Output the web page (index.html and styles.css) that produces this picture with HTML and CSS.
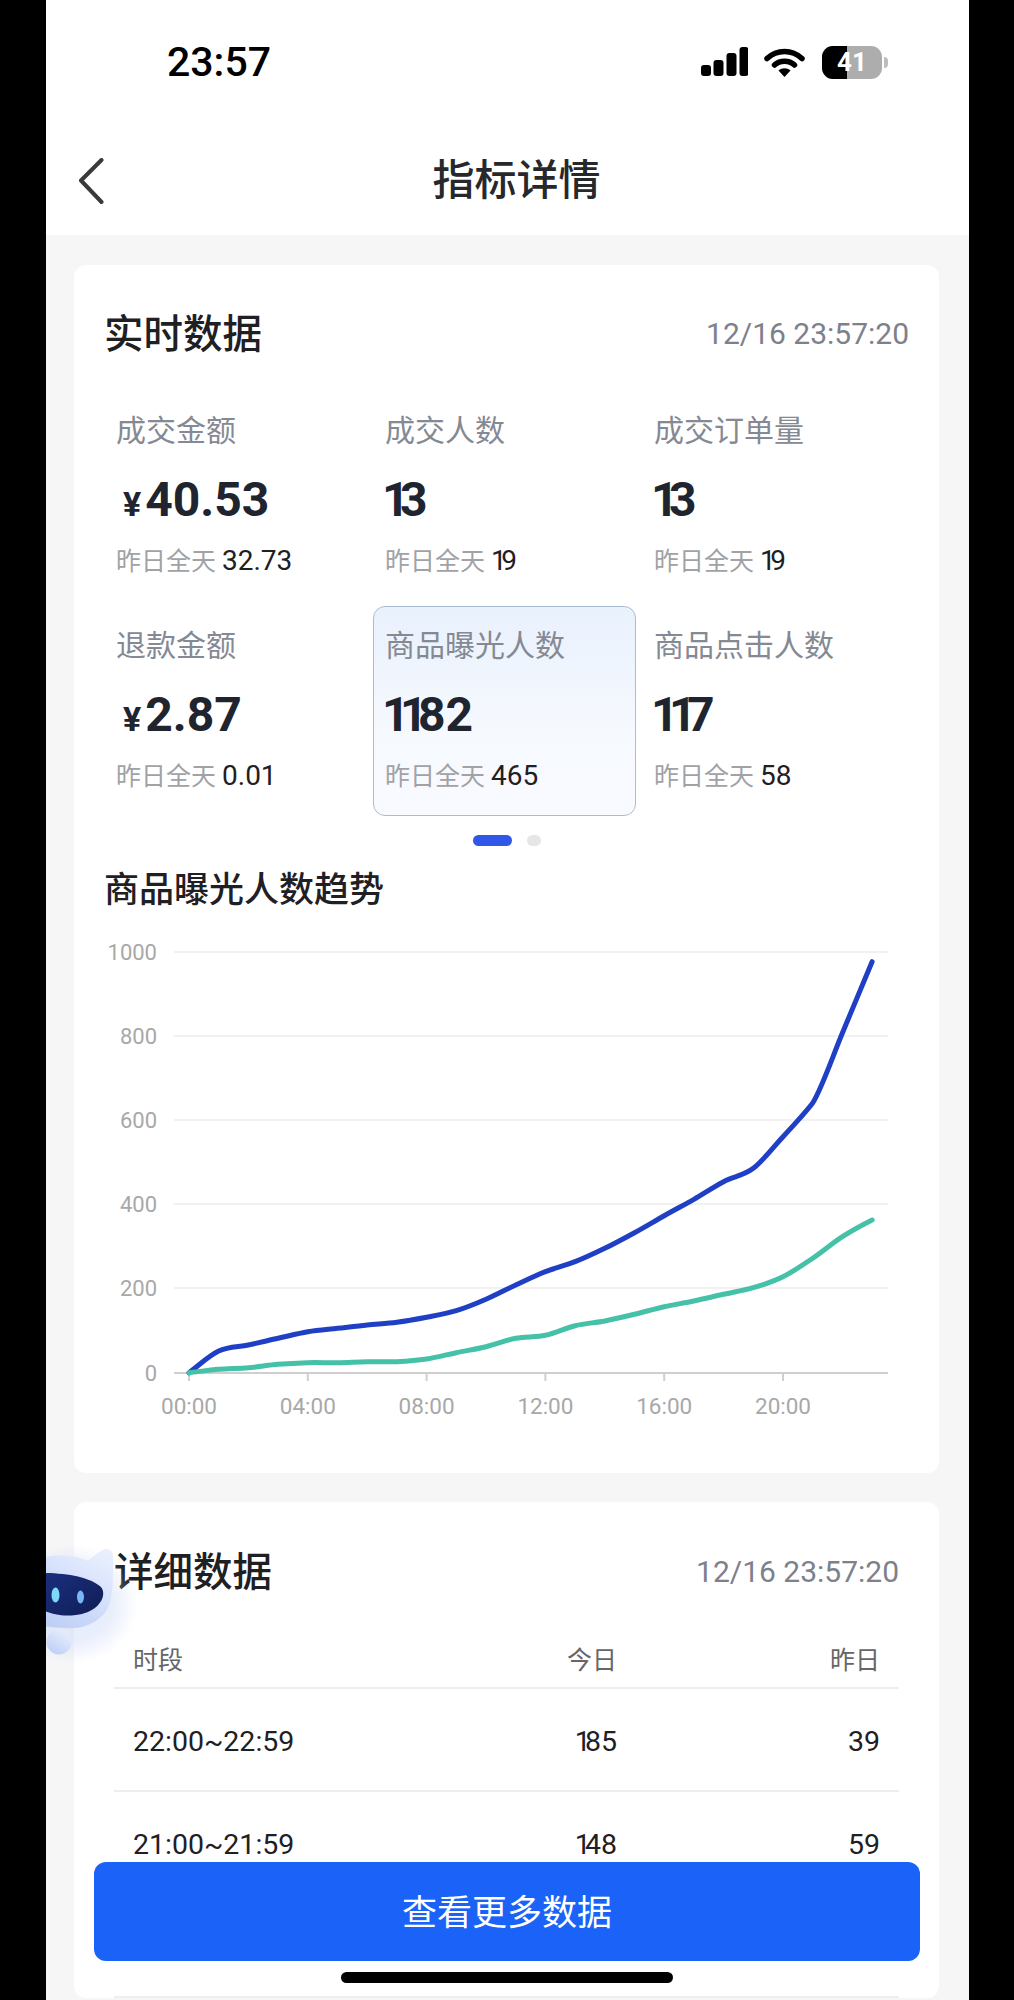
FILE: index.html
```html
<!DOCTYPE html>
<html lang="zh-CN">
<head>
<meta charset="utf-8">
<title>指标详情</title>
<link rel="stylesheet" href="styles.css">
</head>
<body>
<div class="phone">
  <header class="top">
    <div class="status">
      <span class="clock">23:57</span>
      <div class="status-icons">
        <svg class="signal" width="47" height="30" viewBox="0 0 47 30"><rect x="0" y="18" width="10" height="11" rx="3"/><rect x="12.500" y="13" width="10" height="16" rx="3"/><rect x="25.500" y="6" width="10" height="23" rx="3"/><rect x="38.500" y="0" width="9" height="29" rx="3"/></svg>
        <svg class="wifi" width="41" height="30" viewBox="0 0 41 30"><path d="M3 11.500C13 2 28 2 38 11.500" fill="none" stroke="#000" stroke-width="5.500" stroke-linecap="round"/><path d="M10.500 18C16 13 25 13 30.500 18" fill="none" stroke="#000" stroke-width="5.500" stroke-linecap="round"/><path d="M14.500 23.500C18 20.500 23 20.500 26.500 23.500L20.500 30Z"/></svg>
        <div class="battery"><span class="battery-fill"></span><span class="battery-num">41</span><span class="battery-tip"></span></div>
      </div>
    </div>
    <nav class="nav">
      <svg class="back" width="26" height="46" viewBox="0 0 26 46"><path d="M23.500 2L3 22.500L23.500 44" fill="none" stroke="#3a3a3a" stroke-width="4" stroke-linecap="round" stroke-linejoin="round"/></svg>
      <h1 class="nav-title">指标详情</h1>
    </nav>
  </header>

  <main class="content">
    <section class="card card-live">
      <div class="card-head">
        <h2 class="card-title">实时数据</h2>
        <span class="stamp">12/16 23:57:20</span>
      </div>
      <div class="metrics">
        <div class="metric">
          <div class="metric-label">成交金额</div>
          <div class="metric-value"><span class="yen">¥</span>40.53</div>
          <div class="metric-sub"><span>昨日全天</span><b>32.73</b></div>
        </div>
        <div class="metric">
          <div class="metric-label">成交人数</div>
          <div class="metric-value lead"><span class="d1">1</span>3</div>
          <div class="metric-sub"><span>昨日全天</span><b><span class="d1">1</span>9</b></div>
        </div>
        <div class="metric">
          <div class="metric-label">成交订单量</div>
          <div class="metric-value lead"><span class="d1">1</span>3</div>
          <div class="metric-sub"><span>昨日全天</span><b><span class="d1">1</span>9</b></div>
        </div>
        <div class="metric">
          <div class="metric-label">退款金额</div>
          <div class="metric-value"><span class="yen">¥</span>2.87</div>
          <div class="metric-sub"><span>昨日全天</span><b>0.01</b></div>
        </div>
        <div class="metric metric-active">
          <div class="metric-label">商品曝光人数</div>
          <div class="metric-value lead"><span class="d1">11</span>82</div>
          <div class="metric-sub"><span>昨日全天</span><b>465</b></div>
        </div>
        <div class="metric">
          <div class="metric-label">商品点击人数</div>
          <div class="metric-value lead"><span class="d1">11</span>7</div>
          <div class="metric-sub"><span>昨日全天</span><b>58</b></div>
        </div>
      </div>
      <div class="dots"><span class="dot-on"></span><span class="dot-off"></span></div>
      <h3 class="chart-title">商品曝光人数趋势</h3>
      <svg class="chart" width="865" height="543" viewBox="74 930 865 543">
        <g class="grid">
          <line x1="174" x2="888" y1="952" y2="952"/>
          <line x1="174" x2="888" y1="1036" y2="1036"/>
          <line x1="174" x2="888" y1="1120" y2="1120"/>
          <line x1="174" x2="888" y1="1204" y2="1204"/>
          <line x1="174" x2="888" y1="1288" y2="1288"/>
        </g>
        <g class="axis">
          <line x1="174" x2="888" y1="1373" y2="1373"/>
          <line x1="189" x2="189" y1="1373" y2="1381"/>
          <line x1="307.800" x2="307.800" y1="1373" y2="1381"/>
          <line x1="426.600" x2="426.600" y1="1373" y2="1381"/>
          <line x1="545.400" x2="545.400" y1="1373" y2="1381"/>
          <line x1="664.200" x2="664.200" y1="1373" y2="1381"/>
          <line x1="783" x2="783" y1="1373" y2="1381"/>
        </g>
        <g class="ylabels">
          <text x="157" y="960">1000</text>
          <text x="157" y="1044">800</text>
          <text x="157" y="1128">600</text>
          <text x="157" y="1212">400</text>
          <text x="157" y="1296">200</text>
          <text x="157" y="1381">0</text>
        </g>
        <g class="xlabels">
          <text x="189" y="1414">00:00</text>
          <text x="307.800" y="1414">04:00</text>
          <text x="426.600" y="1414">08:00</text>
          <text x="545.400" y="1414">12:00</text>
          <text x="664.200" y="1414">16:00</text>
          <text x="783" y="1414">20:00</text>
        </g>
        <path class="line-blue" d="M189 1372.700c9.900 -7.200 19.800 -17.100 29.700 -21.700c9.900 -4.600 19.800 -3.900 29.700 -6c9.900 -2.100 19.800 -4.500 29.700 -6.700c9.900 -2.200 19.800 -4.900 29.700 -6.600c9.900 -1.700 19.800 -2.300 29.700 -3.400c9.900 -1.100 19.800 -2.300 29.700 -3.300c9.900 -1 19.800 -1.400 29.700 -2.700c9.900 -1.300 19.800 -3.100 29.700 -5c9.900 -1.900 19.800 -3.600 29.700 -6.600c9.900 -3 19.800 -7.100 29.700 -11.400c9.900 -4.300 19.800 -9.700 29.700 -14.300c9.900 -4.600 19.800 -9.400 29.700 -13.300c9.900 -3.900 19.800 -6.100 29.700 -10c9.900 -3.900 19.800 -8.600 29.700 -13.400c9.900 -4.800 19.800 -10.200 29.700 -15.600c9.900 -5.400 19.800 -11.400 29.700 -17c9.900 -5.600 19.800 -10.700 29.700 -16.400c9.900 -5.700 19.800 -12.400 29.700 -17.600c9.900 -5.200 19.800 -5.900 29.700 -13.400c9.900 -7.500 19.800 -21 29.700 -31.600c9.900 -10.600 21.800 -23.400 29.700 -33.700c8.900 -14.300 19.800 -46.100 29.700 -70c9.900 -23.900 19.800 -47.400 29.700 -71.300"/>
        <path class="line-green" d="M189 1372.700c9.900 -1.100 19.800 -2.600 29.700 -3.400c9.900 -.8 19.800 -.8 29.700 -1.600c9.900 -.8 19.800 -2.600 29.700 -3.400c9.900 -.8 19.800 -1.300 29.700 -1.600c9.900 -.3 19.800 .2 29.700 0c9.900 -.2 19.800 -.8 29.700 -1c9.900 -.2 19.800 .5 29.700 0c9.900 -.5 19.800 -1.200 29.700 -2.700c9.900 -1.500 19.800 -4.200 29.700 -6.300c9.900 -2.100 19.800 -3.600 29.700 -6c9.900 -2.400 19.800 -6.500 29.700 -8.400c9.900 -1.900 19.800 -.9 29.700 -3c9.900 -2.100 19.800 -7.200 29.700 -9.600c9.900 -2.400 19.800 -2.800 29.700 -4.700c9.900 -1.900 19.800 -4.300 29.700 -6.700c9.900 -2.400 19.800 -5.400 29.700 -7.600c9.900 -2.200 19.800 -3.600 29.700 -5.700c9.900 -2.100 19.800 -4.500 29.700 -6.700c9.900 -2.200 19.800 -3.700 29.700 -6.600c9.900 -2.900 19.800 -6.100 29.700 -11c9.900 -4.900 19.800 -11.700 29.700 -18.400c9.900 -6.700 19.800 -15.200 29.700 -21.600c9.900 -6.400 19.800 -11.700 29.700 -16.700"/>
      </svg>
    </section>

    <section class="card card-table">
      <div class="card-head">
        <h2 class="card-title">详细数据</h2>
        <span class="stamp">12/16 23:57:20</span>
      </div>
      <div class="table">
        <div class="row row-head"><span>时段</span><span class="num">今日</span><span class="num">昨日</span></div>
        <div class="row"><span>22:00~22:59</span><span class="num"><span class="d1">1</span>85</span><span class="num">39</span></div>
        <div class="row"><span>21:00~21:59</span><span class="num"><span class="d1">1</span>48</span><span class="num">59</span></div>
        <div class="row"><span>&nbsp;</span></div>
      </div>
    </section>
  </main>

  <svg class="robot" width="100" height="125" viewBox="0 0 100 125">
    <defs>
      <radialGradient id="glow" cx="0.5" cy="0.5" r="0.5">
        <stop offset="0.6" stop-color="#c6d4f6" stop-opacity="0.4"/>
        <stop offset="1" stop-color="#c6d4f6" stop-opacity="0"/>
      </radialGradient>
      <linearGradient id="shell" x1="0.8" y1="0" x2="0.2" y2="1">
        <stop offset="0" stop-color="#e9effe"/>
        <stop offset="1" stop-color="#bccef6"/>
      </linearGradient>
      <linearGradient id="visor" x1="0" y1="0" x2="1" y2="1">
        <stop offset="0" stop-color="#1a2f7f"/>
        <stop offset="1" stop-color="#101d55"/>
      </linearGradient>
    </defs>
    <ellipse cx="26" cy="64" rx="66" ry="60" fill="url(#glow)"/>
    <path d="M-12 20C8 13 30 15 42 21C48 16 54 10 60 9C66 9 68 14 67 24C67 36 67 50 64 62C60 78 42 90 20 88C6 88 -6 86 -12 84Z" fill="url(#shell)"/>
    <path d="M-4 33C20 33 44 37 55 47C62 56 52 73 30 75C14 77 4 73 -4 70Z" fill="url(#visor)"/>
    <ellipse cx="9.500" cy="55" rx="4" ry="7.500" fill="#7fd8f8"/>
    <ellipse cx="34.500" cy="57" rx="3.500" ry="6.500" fill="#79b6f6"/>
    <circle cx="13" cy="102" r="12.500" fill="url(#shell)"/>
  </svg>

  <button class="more" type="button">查看更多数据</button>
  <div class="home-bar"></div>
</div>
</body>
</html>
```
FILE: styles.css
```css
* { box-sizing: border-box; }
html, body { margin: 0; padding: 0; background: #000; }
body { font-family: Roboto, "Noto Sans CJK SC", "Liberation Sans", sans-serif; }
h1, h2, h3 { margin: 0; font-weight: 500; }

.phone {
  position: relative;
  width: 923px;
  height: 2000px;
  margin-left: 46px;
  overflow: hidden;
  background: #f6f6f6;
}

/* header */
.top { height: 235px; background: #fff; padding-top: 42px; }
.status { display: flex; justify-content: space-between; align-items: center; height: 40px; padding: 0 87px 0 121px; }
.clock { font-size: 41px; font-weight: 500; line-height: 40px; color: #000; }
.status-icons { display: flex; align-items: center; }
.signal { display: block; margin-right: 16px; }
.wifi { display: block; margin-right: 17px; }
.battery { position: relative; width: 60px; height: 33px; border-radius: 11px; background: #adadad; }
.battery-fill { position: absolute; left: 0; top: 0; bottom: 0; width: 25px; border-radius: 11px 0 0 11px; background: #000; }
.battery-num { position: absolute; left: 0; right: 0; top: 0; text-align: center; color: #fff; font-size: 26px; font-weight: 700; line-height: 33px; }
.battery-tip { position: absolute; left: 62px; top: 11px; width: 4px; height: 11px; border-radius: 0 4px 4px 0; background: #bdbdbd; }

.nav { position: relative; display: flex; align-items: center; justify-content: center; height: 60px; margin-top: 69px; padding-left: 18px; }
.back { position: absolute; left: 32px; top: 7px; }
.nav-title { font-size: 42px; line-height: 60px; color: #26282c; }

/* cards */
.content { padding: 30px 30px 0 28px; display: flex; flex-direction: column; gap: 29px; }
.card { background: #fff; border-radius: 12px; }
.card-live { height: 1208px; padding: 46px 30px 0; }
.card-table { padding: 47px 40px 0; }
.card-head { display: flex; justify-content: space-between; align-items: center; height: 44px; }
.card-title { padding-top: 3px; font-size: 39.500px; line-height: 46px; color: #1e2024; }
.stamp { font-size: 30px; color: #7d818c; }

/* metrics */
.metrics { display: grid; grid-template-columns: repeat(3, 263px); grid-auto-rows: 210px; gap: 5px 6px; margin-top: 36px; }
.metric { padding: 19px 11px 0; border: 1px solid transparent; border-radius: 12px; }
.metric-active { border-color: #a9bdd2; background: linear-gradient(180deg, #e9f1fd 0%, #f6f9fe 60%, #f8faff 100%); }
.metric-label { font-size: 30px; line-height: 40px; color: #858993; }
.metric-value { height: 56px; margin-top: 21px; font-size: 48px; font-weight: 700; line-height: 56px; color: #20242f; }
.lead { margin-left: -3px; }
.yen { margin: 0 4px 0 7px; font-size: 34px; line-height: 1; }
.d1 { letter-spacing: -.2em; }
.metric-sub { display: flex; align-items: baseline; gap: 6px; margin-top: 16px; font-size: 25px; line-height: 34px; color: #a0a2a6; }
.metric-sub b { font-size: 28px; font-weight: 400; color: #1e2024; }

.dots { display: flex; justify-content: center; align-items: center; gap: 15px; margin: 19px 0 0 1px; height: 11px; }
.dot-on { width: 39px; height: 11px; border-radius: 6px; background: #3057e8; }
.dot-off { width: 14px; height: 11px; border-radius: 6px; background: #e6e6e6; }

.chart-title { margin-top: 23px; font-size: 35px; line-height: 44px; color: #1e2024; }
.chart { display: block; margin: 17px 0 0 -30px; }
.grid line { stroke: #f1f1f1; stroke-width: 2; }
.axis line { stroke: #cfcfcf; stroke-width: 2; }
.ylabels text { font-size: 22px; fill: #a8a8a8; text-anchor: end; }
.xlabels text { font-size: 22.500px; fill: #a8a8a8; text-anchor: middle; }
.line-blue, .line-green { fill: none; stroke-width: 5; stroke-linecap: round; stroke-linejoin: round; }
.line-blue { stroke: #1f3fc4; }
.line-green { stroke: #45c1a8; }

/* table */
.table { margin-top: 47px; }
.row { display: grid; grid-template-columns: 1fr 100px 263px; align-items: center; height: 103px; padding: 4px 19px 0 19px; border-bottom: 2px solid #eeeeee; font-size: 28.500px; color: #1e2024; }
.row-head { height: 49px; padding: 0 19px 12px 19px; font-size: 25px; color: #666; }
.num { text-align: right; }

/* overlays */
.robot { position: absolute; left: 0; top: 1540px; }
.more { position: absolute; left: 48px; top: 1862px; width: 826px; height: 99px; padding: 0 0 5px; border: 0; border-radius: 12px; background: #1a62f8; color: #fff; font-family: inherit; font-size: 35px; }
.home-bar { position: absolute; left: 295px; top: 1972px; width: 332px; height: 11px; border-radius: 6px; background: #000; }
```
